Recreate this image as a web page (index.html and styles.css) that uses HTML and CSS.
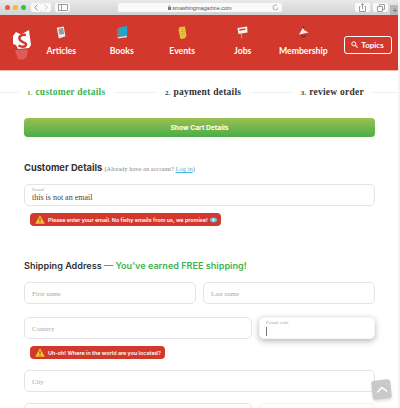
FILE: index.html
```html
<!DOCTYPE html>
<html lang="en">
<head>
    <meta charset="UTF-8">
    <meta name="viewport" content="width=device-width, initial-scale=1.0">
    <title>Checkout</title>
    <link rel="stylesheet" href="styles.css">
</head>
<body>
    <div class="browser-bar">
        <div class="lights">
            <span class="light light-red"></span>
            <span class="light light-yellow"></span>
            <span class="light light-green"></span>
        </div>
        <div class="nav-pair">
            <span class="tool-btn tool-half"><svg width="4" height="7" viewBox="0 0 4 7"><path d="M3.500 .5 .8 3.500l2.700 3" fill="none" stroke="#777" stroke-width=".8"/></svg></span>
            <span class="tool-btn tool-half"><svg width="4" height="7" viewBox="0 0 4 7"><path d="M.5 .5l2.700 3-2.700 3" fill="none" stroke="#bbb" stroke-width=".8"/></svg></span>
        </div>
        <span class="tool-btn tool-side"><svg width="10" height="7" viewBox="0 0 10 7"><rect x=".5" y=".5" width="9" height="6" fill="none" stroke="#888" stroke-width=".8"/><path d="M3.500 .5v6" stroke="#888" stroke-width=".8"/></svg></span>
        <div class="address">
            <svg width="3" height="5" viewBox="0 0 3 5"><rect y="2" width="3" height="3" fill="#777"/><path d="M.7 2V1.200a.8.8 0 0 1 1.600 0V2" fill="none" stroke="#777" stroke-width=".5"/></svg>
            <span class="address-text">smashingmagazine.com</span>
            <svg class="reload" width="7" height="7" viewBox="0 0 7 7"><path d="M6 3.500A2.500 2.500 0 1 1 3.500 1H5" fill="none" stroke="#999" stroke-width=".8"/></svg>
        </div>
        <span class="tool-btn tool-side tool-share"><svg width="7" height="9" viewBox="0 0 7 9"><path d="M1.500 3.500H.5v5h6v-5h-1M3.500 6V.8M2 2l1.500-1.300L5 2" fill="none" stroke="#888" stroke-width=".8"/></svg></span>
        <span class="tool-btn tool-side"><svg width="8" height="8" viewBox="0 0 8 8"><path d="M.5 2.500h5v5h-5zM2.500 2.500v-2h5v5h-2" fill="none" stroke="#888" stroke-width=".8"/></svg></span>
        <span class="new-tab">+</span>
    </div>

    <header class="site-header">
        <a class="logo">
            <svg width="20" height="30" viewBox="0 0 20 30">
                <path d="M1 6 4 2l5 2.500L17 0l2 15-2 3-6 .5-5 .5-2-4-3-1z" fill="#fff"/>
                <path d="M14 5C9 4 6 7 8 10s7 2.500 6 5-5 2-7.500 .5" fill="none" stroke="#d3382c" stroke-width="2.400"/>
                <path d="M3 20l13-.5-1 7-3 3H6z" fill="#e98a82" opacity=".45"/>
            </svg>
        </a>
        <nav class="main-nav">
            <a class="nav-item">
                <svg width="10" height="13" viewBox="0 0 10 14"><path d="M.5 2 8 .5l1.700 10.500-7 2.500z" fill="#eee"/><path d="M2.200 3 7.300 2l1 6.500-5 1z" fill="#999"/></svg>
                <span>Articles</span>
            </a>
            <a class="nav-item">
                <svg width="12" height="13" viewBox="0 0 12 14"><path d="M2 1.500 11.500 0v10.500L2 12z" fill="#20a6c6"/><path d="M.5 4 2 1.500 2 12l-1 1.500z" fill="#e2574c"/><path d="M1 13.500 11 12l.5-1.500L2 12z" fill="#eee"/></svg>
                <span>Books</span>
            </a>
            <a class="nav-item">
                <svg width="9" height="13" viewBox="0 0 9 13"><path d="M1.500 1 7 .5 8.500 10l-2 2.500-4 .5L.5 4z" fill="#e5c33a"/><path d="M3 3.500l3-.5M3 6l3.500-.5M3.500 8.500l3-.5" stroke="#c9a62a" stroke-width=".8"/></svg>
                <span>Events</span>
            </a>
            <a class="nav-item">
                <svg width="11" height="13" viewBox="0 0 12 14"><path d="M.5 2 11 .5l.5 6.500-10 1.500z" fill="#f4f0ea"/><path d="M2.500 3.500l6.500-1 .2 1.500-6.500 1z" fill="#d3382c"/><path d="M4 8.500l.8 5h1l-.4-5z" fill="#e98a82"/></svg>
                <span>Jobs</span>
            </a>
            <a class="nav-item">
                <svg width="11" height="13" viewBox="0 0 12 13"><path d="M5.500 1 7 4l4.500 2.500-5 1L1 9z" fill="#f3efe9"/><path d="M5 0h2L6 3z" fill="#7c1f18"/><path d="M2 9l4 1 3-2-1.500 4h-3z" fill="#8f2a22"/></svg>
                <span>Membership</span>
            </a>
        </nav>
        <a class="topics-btn">
            <svg width="7" height="7" viewBox="0 0 8 8"><circle cx="3.200" cy="3.200" r="2.300" fill="none" stroke="#fff" stroke-width="1.100"/><path d="M5 5l2.500 2.500" stroke="#fff" stroke-width="1.300"/></svg>
            Topics
        </a>
    </header>

    <div class="steps">
        <span class="step-line step-line-first"></span>
        <span class="step step-active"><small>1.</small> customer details</span>
        <span class="step-line"></span>
        <span class="step"><small>2.</small> payment details</span>
        <span class="step-line"></span>
        <span class="step"><small>3.</small> review order</span>
        <span class="step-line step-line-last"></span>
    </div>

    <main class="checkout">
        <button class="cart-btn">Show Cart Details</button>

        <h2 class="section-title section-customer">Customer Details <span class="login-hint">(Already have an account? <a>Log in</a>)</span></h2>
        <div class="field field-filled">
            <label>Email</label>
            <div class="field-value">this is not an email</div>
        </div>
        <div class="error">
            <svg class="warn" width="10" height="9" viewBox="0 0 10 9"><path d="M5 .3 9.800 8.700H.2z" fill="#f5c431"/><path d="M5 3v3M5 6.800v1" stroke="#7a2a12" stroke-width=".9"/></svg>
            Please enter your email. No fishy emails from us, we promise!
            <svg class="eye" width="7" height="6" viewBox="0 0 8 6"><ellipse cx="4" cy="3" rx="4" ry="2.800" fill="#6cc3e0"/><circle cx="4" cy="3" r="1.300" fill="#fff"/></svg>
        </div>

        <h2 class="section-title section-shipping">Shipping Address <span class="free">— You've earned FREE shipping!</span></h2>
        <div class="row">
            <div class="field field-half"><span class="placeholder">First name</span></div>
            <div class="field field-half"><span class="placeholder">Last name</span></div>
        </div>
        <div class="row row-country">
            <div class="field field-wide"><span class="placeholder">Country</span></div>
            <div class="field field-narrow field-focus">
                <label>Postal code</label>
                <span class="caret"></span>
            </div>
        </div>
        <div class="error">
            <svg class="warn" width="10" height="9" viewBox="0 0 10 9"><path d="M5 .3 9.800 8.700H.2z" fill="#f5c431"/><path d="M5 3v3M5 6.800v1" stroke="#7a2a12" stroke-width=".9"/></svg>
            Uh-oh! Where in the world are you located?
        </div>
        <div class="field field-city"><span class="placeholder">City</span></div>
        <div class="row row-last">
            <div class="field field-wide"></div>
            <div class="field field-narrow field-faint"></div>
        </div>
    </main>

    <a class="to-top"><svg width="12" height="7" viewBox="0 0 12 7"><path d="M1 6l5-4.500L11 6" fill="none" stroke="#fff" stroke-width="1.600"/></svg></a>
</body>
</html>
```

FILE: styles.css
```css
:root {
    --red: #d3382c;
    --field-border: #e4e4e4;
    --dark-text: #333;
    --muted: #aaa;
    --green: #3fb34f;
}

html, body {
    height: 408px;
    overflow: hidden;
}

body {
    margin: 0;
    padding: 0;
    background-color: white;
    font-family: 'Inter', 'Liberation Sans', sans-serif;
    color: var(--dark-text);
    border-right: 2px solid #f3f3f3;
    box-sizing: border-box;
}

/* browser chrome */
.browser-bar {
    height: 15px;
    display: flex;
    align-items: center;
    padding-left: 5px;
    background: linear-gradient(#e9e9e9, #d2d2d2);
    margin-right: -2px;
    position: relative;
}

.lights {
    display: flex;
    gap: 3px;
    margin-right: 5px;
}

.light {
    width: 5px;
    height: 5px;
    border-radius: 50%;
}

.light-red { background-color: #f0574e; }
.light-yellow { background-color: #f5b92d; }
.light-green { background-color: #28c840; }

.nav-pair {
    display: flex;
    margin-right: 4px;
}

.tool-btn {
    height: 9px;
    display: flex;
    align-items: center;
    justify-content: center;
    background-color: #fafafa;
    border-radius: 2px;
}

.tool-half { width: 10px; }
.tool-side { width: 15px; }
.tool-share { margin-right: 3px; }

.address {
    flex: 0 0 164px;
    height: 9px;
    margin-left: 48px;
    margin-right: 73px;
    display: flex;
    align-items: center;
    justify-content: center;
    gap: 1px;
    background-color: #fafafa;
    border-radius: 2px;
    position: relative;
}

.address-text {
    font-size: 5.500px;
    color: #555;
    font-family: 'Liberation Sans', sans-serif;
}

.reload {
    position: absolute;
    right: 3px;
    top: 1px;
}

.new-tab {
    position: absolute;
    right: 0;
    top: 5px;
    width: 10px;
    height: 10px;
    background-color: #b9b9b9;
    color: #777;
    font-size: 9px;
    line-height: 10px;
    text-align: center;
}

/* site header */
.site-header {
    height: 55px;
    display: flex;
    align-items: center;
    background-color: var(--red);
    border-bottom: 1px solid #eeb4ae;
    margin-right: -2px;
}

.logo {
    width: 20px;
    margin-left: 12px;
    margin-top: 5px;
    display: flex;
}

.main-nav {
    display: flex;
    margin-left: -1px;
}

.nav-item {
    width: 60.500px;
    height: 30px;
    margin-top: -3px;
    display: flex;
    flex-direction: column;
    align-items: center;
    justify-content: space-between;
    color: white;
    font-family: 'Lato', sans-serif;
    font-weight: bold;
    font-size: 8.700px;
}

.topics-btn {
    width: 46px;
    height: 16px;
    margin-left: 10px;
    margin-top: 4px;
    display: flex;
    align-items: center;
    justify-content: center;
    gap: 3px;
    border: 1px solid white;
    border-radius: 3px;
    color: white;
    font-family: 'Lato', sans-serif;
    font-weight: bold;
    font-size: 8px;
}

/* checkout steps */
.steps {
    height: 20px;
    margin-top: 11px;
    display: flex;
    align-items: center;
    font-family: 'Liberation Serif', serif;
    font-weight: bold;
    font-size: 9.500px;
    letter-spacing: .25px;
    color: #333;
}

.step { white-space: nowrap; }
.step small { font-size: 7px; }
.step-active { color: var(--green); }

.step-line {
    flex: 1;
    height: 1px;
    margin: 0 9px;
    background-color: #f0f0f0;
}

.step-line-first {
    flex: 0 0 19px;
    margin: 0 8px 0 0;
}

.step-line-last {
    flex: 0 0 26px;
    margin: 0 0 0 8px;
}

/* form */
.checkout {
    padding: 16px 23px 0 24px;
}

.cart-btn {
    display: block;
    width: 100%;
    height: 19px;
    padding: 0;
    border: none;
    border-radius: 4px;
    background: linear-gradient(#9cc04e, #49ad4c);
    color: white;
    font-family: 'Inter', 'Liberation Sans', sans-serif;
    font-weight: bold;
    font-size: 6.700px;
}

.section-title {
    height: 14px;
    margin: 0;
    line-height: 14px;
}

.section-customer {
    margin-top: 24px;
    font-size: 9.300px;
    font-weight: 700;
}

.section-shipping {
    margin-top: 33px;
    font-size: 9.100px;
    font-weight: 600;
}

.login-hint {
    font-family: 'Liberation Serif', serif;
    font-weight: normal;
    font-size: 6.500px;
    color: #888;
}

.login-hint a {
    color: #52b3db;
    text-decoration: underline;
}

.free { color: var(--green); }

.field {
    height: 22px;
    margin-top: 9px;
    box-sizing: border-box;
    padding: 0 7px;
    border: 1px solid var(--field-border);
    border-radius: 5px;
    background-color: white;
    font-family: 'Liberation Serif', serif;
    display: flex;
    flex-direction: column;
    justify-content: center;
}

.field label {
    font-size: 5px;
    line-height: 6px;
    color: #aaa;
}

.field-value {
    font-size: 8px;
    line-height: 10px;
    color: #444;
}

.placeholder {
    font-size: 6.800px;
    color: var(--muted);
}

.row {
    display: flex;
    gap: 7px;
}

.field-half { flex: 1; }
.field-wide { flex: 0 0 228px; }
.field-narrow { flex: 1; }
.field-faint { border-color: #f2f2f2; }

.row-country { margin-top: 4px; }
.row-last { margin-top: 2px; }

.field-focus {
    padding-left: 6px;
    border-color: #f6f6f6;
    box-shadow: 0 2px 6px rgba(0, 0, 0, 0.3);
}

.caret {
    display: block;
    width: 1px;
    height: 9px;
    margin-top: 1px;
    background-color: #777;
}

.error {
    display: flex;
    width: fit-content;
    align-items: center;
    gap: 3px;
    height: 13px;
    margin: 7px 0 0 6px;
    padding: 0 4px 0 5px;
    border-radius: 4px;
    background-color: var(--red);
    color: white;
    font-family: 'Inter', 'Liberation Sans', sans-serif;
    font-weight: 600;
    font-size: 5.400px;
    white-space: nowrap;
}

.eye { margin-left: -1px; }

.field-city { margin-top: 11px; }

.to-top {
    position: absolute;
    left: 372px;
    top: 380px;
    width: 19px;
    height: 19px;
    display: flex;
    align-items: center;
    justify-content: center;
    border-radius: 3px;
    background-color: #c9c9c9;
    transform: rotate(-6deg);
    box-shadow: 0 2px 3px rgba(0, 0, 0, 0.12);
}
```
